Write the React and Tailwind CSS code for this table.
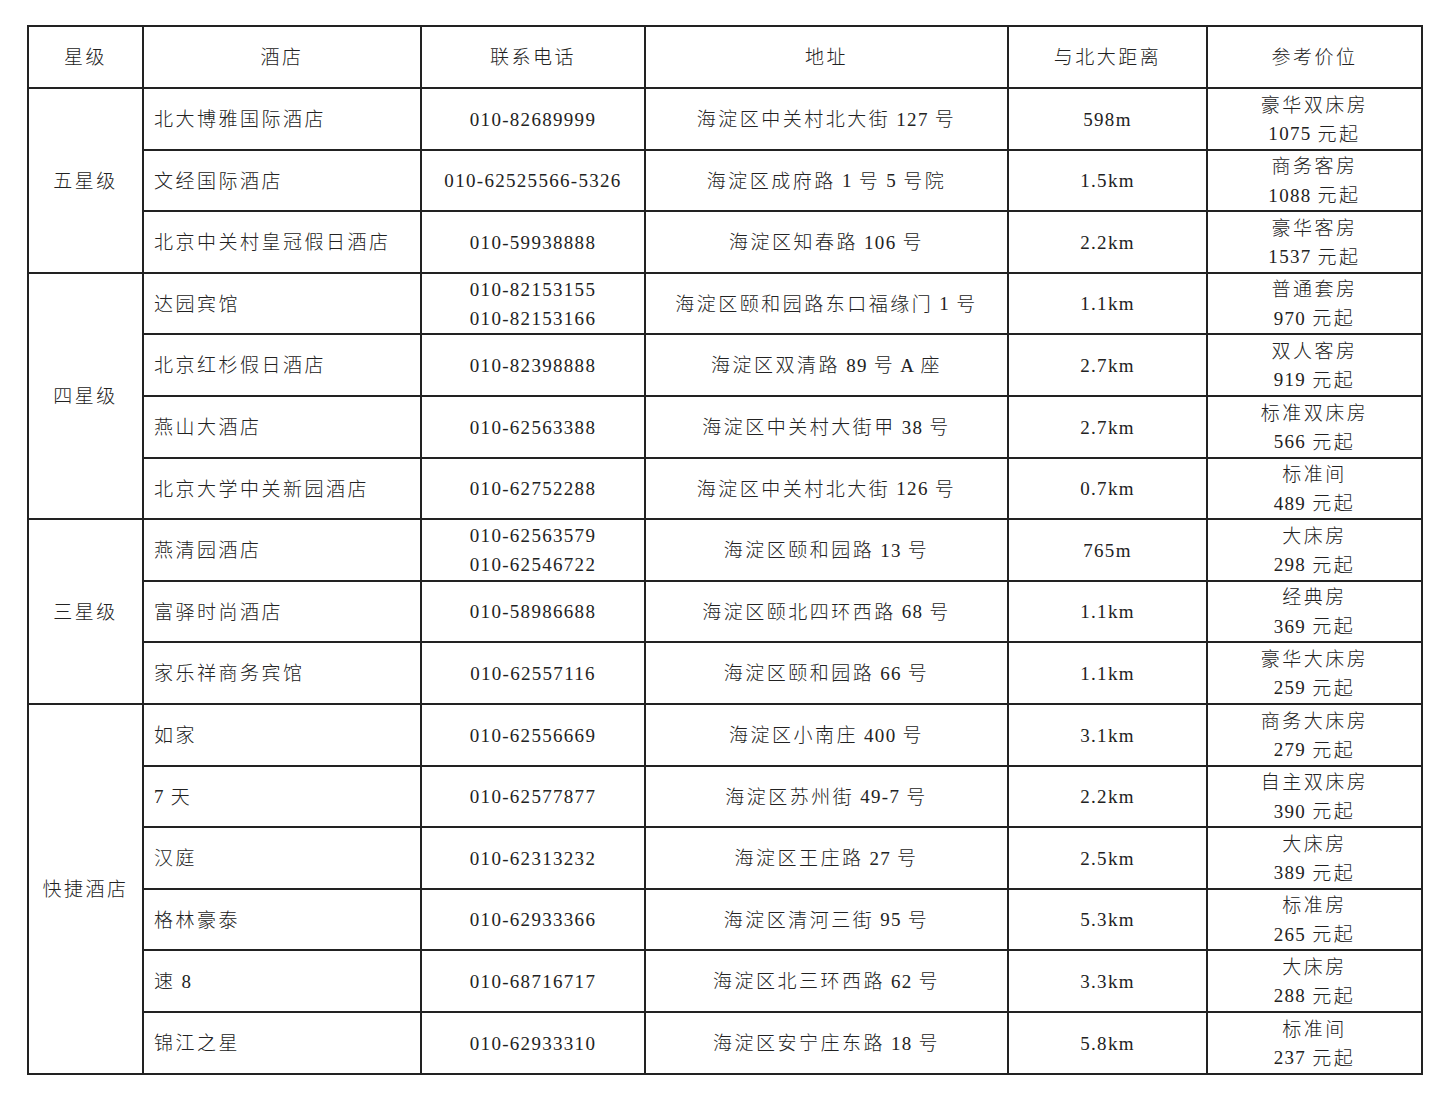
import React from 'react';

const groups = [
  {
    level: '五星级',
    hotels: [
      ['北大博雅国际酒店', ['010-82689999'], '海淀区中关村北大街 127 号', '598m', '豪华双床房', '1075 元起'],
      ['文经国际酒店', ['010-62525566-5326'], '海淀区成府路 1 号 5 号院', '1.5km', '商务客房', '1088 元起'],
      ['北京中关村皇冠假日酒店', ['010-59938888'], '海淀区知春路 106 号', '2.2km', '豪华客房', '1537 元起'],
    ],
  },
  {
    level: '四星级',
    hotels: [
      ['达园宾馆', ['010-82153155', '010-82153166'], '海淀区颐和园路东口福缘门 1 号', '1.1km', '普通套房', '970 元起'],
      ['北京红杉假日酒店', ['010-82398888'], '海淀区双清路 89 号 A 座', '2.7km', '双人客房', '919 元起'],
      ['燕山大酒店', ['010-62563388'], '海淀区中关村大街甲 38 号', '2.7km', '标准双床房', '566 元起'],
      ['北京大学中关新园酒店', ['010-62752288'], '海淀区中关村北大街 126 号', '0.7km', '标准间', '489 元起'],
    ],
  },
  {
    level: '三星级',
    hotels: [
      ['燕清园酒店', ['010-62563579', '010-62546722'], '海淀区颐和园路 13 号', '765m', '大床房', '298 元起'],
      ['富驿时尚酒店', ['010-58986688'], '海淀区颐北四环西路 68 号', '1.1km', '经典房', '369 元起'],
      ['家乐祥商务宾馆', ['010-62557116'], '海淀区颐和园路 66 号', '1.1km', '豪华大床房', '259 元起'],
    ],
  },
  {
    level: '快捷酒店',
    hotels: [
      ['如家', ['010-62556669'], '海淀区小南庄 400 号', '3.1km', '商务大床房', '279 元起'],
      ['7 天', ['010-62577877'], '海淀区苏州街 49-7 号', '2.2km', '自主双床房', '390 元起'],
      ['汉庭', ['010-62313232'], '海淀区王庄路 27 号', '2.5km', '大床房', '389 元起'],
      ['格林豪泰', ['010-62933366'], '海淀区清河三街 95 号', '5.3km', '标准房', '265 元起'],
      ['速 8', ['010-68716717'], '海淀区北三环西路 62 号', '3.3km', '大床房', '288 元起'],
      ['锦江之星', ['010-62933310'], '海淀区安宁庄东路 18 号', '5.8km', '标准间', '237 元起'],
    ],
  },
];

// row heights alternate 62/61 in the scan
const tall = [true, false, true, false, true, true, false, true, false, true, true, false, true, false, true, true];

// one line of text: latin runs in serif, chinese runs with wider tracking
const Line = ({ text, left }) => {
  const parts = text.match(/[\x00-\x7F]+|[^\x00-\x7F]+/g) || [];
  return (
    <div className={'flex items-center h-[29px] ' + (left ? 'justify-start' : 'justify-center')}>
      {parts.map((p, i) =>
        /^[\x00-\x7F]+$/.test(p) ? (
          <span key={i} className="font-['Liberation_Serif',serif] tracking-[1.3px] whitespace-pre leading-[29px]">
            {p}
          </span>
        ) : (
          <span key={i} className="font-['Noto_Sans_CJK_SC',sans-serif] font-light tracking-[2.5px] leading-[29px] pb-[3px]">
            {p}
          </span>
        )
      )}
    </div>
  );
};

const cell = 'border-2 border-[#222] text-[19px] text-[#222] align-middle p-0 overflow-hidden';

export default function App() {
  let n = 0;
  return (
    <div className="bg-white w-[1450px] h-[1100px] pt-[25px] pl-[27px]">
      <table className="border-collapse table-fixed w-[1394px]">
        <colgroup>
          <col className="w-[115px]" />
          <col className="w-[278px]" />
          <col className="w-[224px]" />
          <col className="w-[363px]" />
          <col className="w-[199px]" />
          <col className="w-[215px]" />
        </colgroup>
        <thead>
          <tr className="h-[62px]">
            {['星级', '酒店', '联系电话', '地址', '与北大距离', '参考价位'].map((h) => (
              <th key={h} className={cell + ' font-normal'}>
                <Line text={h} />
              </th>
            ))}
          </tr>
        </thead>
        <tbody>
          {groups.map((g) =>
            g.hotels.map((h, i) => (
              <tr key={h[0]} className={tall[n++] ? 'h-[62px]' : 'h-[61px]'}>
                {i === 0 && (
                  <td rowSpan={g.hotels.length} className={cell}>
                    <Line text={g.level} />
                  </td>
                )}
                <td className={cell + ' pl-[10px]'}>
                  <Line text={h[0]} left />
                </td>
                <td className={cell}>
                  {h[1].map((p) => (
                    <Line key={p} text={p} />
                  ))}
                </td>
                <td className={cell}>
                  <Line text={h[2]} />
                </td>
                <td className={cell}>
                  <Line text={h[3]} />
                </td>
                <td className={cell}>
                  <Line text={h[4]} />
                  <Line text={h[5]} />
                </td>
              </tr>
            ))
          )}
        </tbody>
      </table>
    </div>
  );
}
